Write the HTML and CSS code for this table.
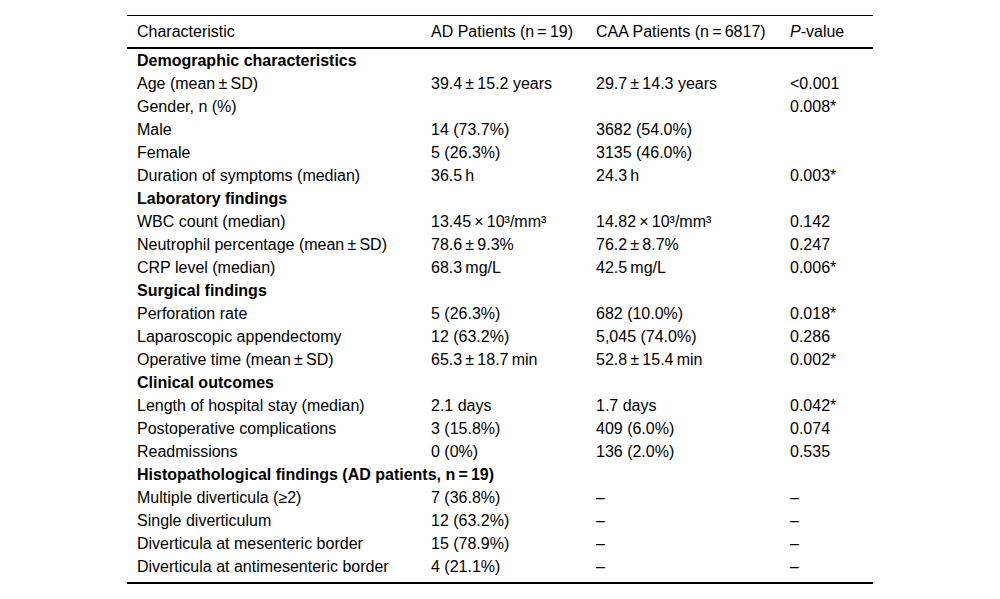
FILE: index.html
```html
<!DOCTYPE html>
<html lang="en">
<head>
<meta charset="utf-8">
<title>Table</title>
<link rel="stylesheet" href="styles.css">
</head>
<body>
<div class="page">
<table class="data">
<colgroup>
<col class="c1"><col class="c2"><col class="c3"><col class="c4">
</colgroup>
<thead>
<tr><th>Characteristic</th><th>AD Patients (n&#8201;=&#8201;19)</th><th>CAA Patients (n&#8201;=&#8201;6817)</th><th><i>P</i>-value</th></tr>
</thead>
<tbody>
<tr class="sec"><td colspan="4">Demographic characteristics</td></tr>
<tr><td>Age (mean&#8201;±&#8201;SD)</td><td>39.4&#8201;±&#8201;15.2 years</td><td>29.7&#8201;±&#8201;14.3 years</td><td>&lt;0.001</td></tr>
<tr><td>Gender, n (%)</td><td></td><td></td><td>0.008*</td></tr>
<tr><td>Male</td><td>14 (73.7%)</td><td>3682 (54.0%)</td><td></td></tr>
<tr><td>Female</td><td>5 (26.3%)</td><td>3135 (46.0%)</td><td></td></tr>
<tr><td>Duration of symptoms (median)</td><td>36.5&#8201;h</td><td>24.3&#8201;h</td><td>0.003*</td></tr>
<tr class="sec"><td colspan="4">Laboratory findings</td></tr>
<tr><td>WBC count (median)</td><td>13.45&#8201;×&#8201;10³/mm³</td><td>14.82&#8201;×&#8201;10³/mm³</td><td>0.142</td></tr>
<tr><td>Neutrophil percentage (mean&#8201;±&#8201;SD)</td><td>78.6&#8201;±&#8201;9.3%</td><td>76.2&#8201;±&#8201;8.7%</td><td>0.247</td></tr>
<tr><td>CRP level (median)</td><td>68.3&#8201;mg/L</td><td>42.5&#8201;mg/L</td><td>0.006*</td></tr>
<tr class="sec"><td colspan="4">Surgical findings</td></tr>
<tr><td>Perforation rate</td><td>5 (26.3%)</td><td>682 (10.0%)</td><td>0.018*</td></tr>
<tr><td>Laparoscopic appendectomy</td><td>12 (63.2%)</td><td>5,045 (74.0%)</td><td>0.286</td></tr>
<tr><td>Operative time (mean&#8201;±&#8201;SD)</td><td>65.3&#8201;±&#8201;18.7&#8201;min</td><td>52.8&#8201;±&#8201;15.4&#8201;min</td><td>0.002*</td></tr>
<tr class="sec"><td colspan="4">Clinical outcomes</td></tr>
<tr><td>Length of hospital stay (median)</td><td>2.1 days</td><td>1.7 days</td><td>0.042*</td></tr>
<tr><td>Postoperative complications</td><td>3 (15.8%)</td><td>409 (6.0%)</td><td>0.074</td></tr>
<tr><td>Readmissions</td><td>0 (0%)</td><td>136 (2.0%)</td><td>0.535</td></tr>
<tr class="sec"><td colspan="4">Histopathological findings (AD patients, n&#8201;=&#8201;19)</td></tr>
<tr><td>Multiple diverticula (≥2)</td><td>7 (36.8%)</td><td>–</td><td>–</td></tr>
<tr><td>Single diverticulum</td><td>12 (63.2%)</td><td>–</td><td>–</td></tr>
<tr><td>Diverticula at mesenteric border</td><td>15 (78.9%)</td><td>–</td><td>–</td></tr>
<tr class="last"><td>Diverticula at antimesenteric border</td><td>4 (21.1%)</td><td>–</td><td>–</td></tr>
</tbody>
</table>
</div>
</body>
</html>
```
FILE: styles.css
```css
html, body {
  margin: 0;
  padding: 0;
  background: #fff;
}
.page {
  padding-top: 15px;
  display: flex;
  justify-content: center;
}
.data {
  width: 746px;
  border-collapse: collapse;
  table-layout: fixed;
  font-family: "Liberation Sans", Arial, sans-serif;
  font-size: 16px;
  line-height: 19px;
  color: #000;
  border-top: 1px solid #000;
  border-bottom: 2px solid #000;
}
.c1 { width: 294px; }
.c2 { width: 165px; }
.c3 { width: 194px; }
.c4 { width: 93px; }
.data th {
  font-weight: normal;
  text-align: left;
  padding: 6px 10px 6px 10px;
  border-bottom: 2px solid #000;
  white-space: nowrap;
}
.data td {
  padding: 2px 10px;
  white-space: nowrap;
  text-align: left;
}
.data tr.sec td {
  font-weight: bold;
}
.data tr.last td {
  padding-bottom: 6px;
}
```
